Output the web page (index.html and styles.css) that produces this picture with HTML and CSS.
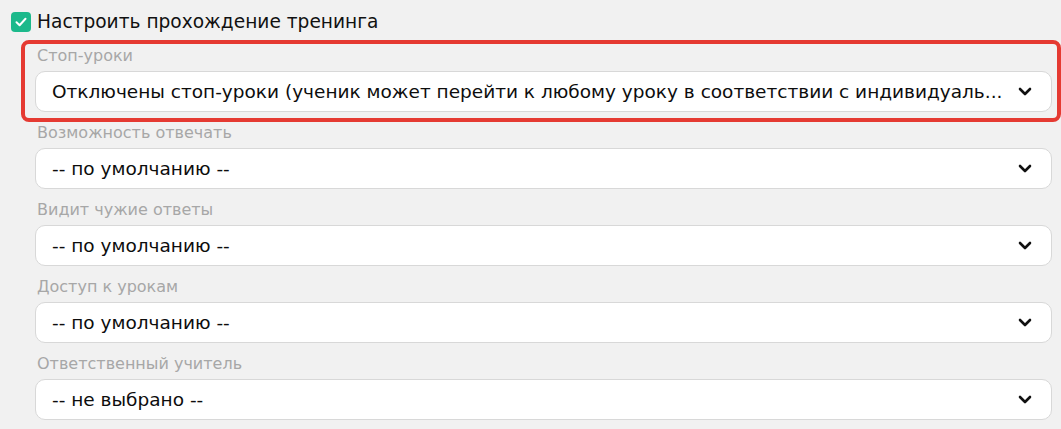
FILE: index.html
```html
<!DOCTYPE html>
<html lang="ru">
<head>
<meta charset="utf-8">
<title>Настроить прохождение тренинга</title>
<link rel="stylesheet" href="styles.css">
</head>
<body>
<div class="page">
  <label class="toggle">
    <span class="checkbox">
      <svg width="14" height="14" viewBox="0 0 14 14"><path d="M2.5 7.3 L5.6 10.2 L11.5 3.8" fill="none" stroke="#fff" stroke-width="2" stroke-linecap="round" stroke-linejoin="round"/></svg>
    </span>
    <span class="toggle-text">Настроить прохождение тренинга</span>
  </label>
  <div class="fields">
    <div class="field">
      <div class="highlight"></div>
      <div class="field-label">Стоп-уроки</div>
      <div class="select">
        <span class="select-value">Отключены стоп-уроки (ученик может перейти к любому уроку в соответствии с индивидуаль...</span>
        <svg class="chevron" width="14" height="9" viewBox="0 0 14 9"><path d="M2 2 L7 7 L12 2" fill="none" stroke="#111" stroke-width="2.6" stroke-linecap="round" stroke-linejoin="round"/></svg>
      </div>
    </div>
    <div class="field">
      <div class="field-label">Возможность отвечать</div>
      <div class="select">
        <span class="select-value">-- по умолчанию --</span>
        <svg class="chevron" width="14" height="9" viewBox="0 0 14 9"><path d="M2 2 L7 7 L12 2" fill="none" stroke="#111" stroke-width="2.6" stroke-linecap="round" stroke-linejoin="round"/></svg>
      </div>
    </div>
    <div class="field">
      <div class="field-label">Видит чужие ответы</div>
      <div class="select">
        <span class="select-value">-- по умолчанию --</span>
        <svg class="chevron" width="14" height="9" viewBox="0 0 14 9"><path d="M2 2 L7 7 L12 2" fill="none" stroke="#111" stroke-width="2.6" stroke-linecap="round" stroke-linejoin="round"/></svg>
      </div>
    </div>
    <div class="field">
      <div class="field-label">Доступ к урокам</div>
      <div class="select">
        <span class="select-value">-- по умолчанию --</span>
        <svg class="chevron" width="14" height="9" viewBox="0 0 14 9"><path d="M2 2 L7 7 L12 2" fill="none" stroke="#111" stroke-width="2.6" stroke-linecap="round" stroke-linejoin="round"/></svg>
      </div>
    </div>
    <div class="field">
      <div class="field-label">Ответственный учитель</div>
      <div class="select">
        <span class="select-value">-- не выбрано --</span>
        <svg class="chevron" width="14" height="9" viewBox="0 0 14 9"><path d="M2 2 L7 7 L12 2" fill="none" stroke="#111" stroke-width="2.6" stroke-linecap="round" stroke-linejoin="round"/></svg>
      </div>
    </div>
  </div>
</div>
</body>
</html>
```

FILE: styles.css
```css
* { box-sizing: border-box; }
html, body { margin: 0; padding: 0; }
body {
  background: #f1f1f1;
  font-family: "DejaVu Sans", "Noto Sans", sans-serif;
  color: #111;
  width: 1061px;
  height: 429px;
  overflow: hidden;
}
.page {
  padding: 12px 9px 0 11px;
}
.toggle {
  display: flex;
  align-items: center;
  gap: 6px;
  height: 20px;
}
.checkbox {
  width: 20px;
  height: 20px;
  border-radius: 4px;
  background: #1cb98b;
  display: flex;
  align-items: center;
  justify-content: center;
  flex: none;
}
.toggle-text {
  font-size: 18.6px;
  line-height: 20px;
  color: #111;
}
.fields {
  margin-top: 14px;
  padding-left: 24px;
  display: flex;
  flex-direction: column;
  gap: 11px;
}
.field {
  position: relative;
}
.highlight {
  position: absolute;
  left: -14px;
  right: -9px;
  top: -6px;
  bottom: -10px;
  border: 4px solid #e53a32;
  border-radius: 8px;
  pointer-events: none;
}
.field-label {
  font-size: 16px;
  line-height: 20px;
  color: #a7a7a7;
  padding-left: 2px;
  margin-bottom: 5px;
}
.select {
  height: 41px;
  background: #fff;
  border: 1px solid #d8d8d8;
  border-radius: 10px;
  display: flex;
  align-items: center;
  padding: 0 19px 0 16px;
}
.select-value {
  flex: 1;
  min-width: 0;
  font-size: 18.5px;
  white-space: nowrap;
  overflow: hidden;
  padding-right: 12px;
  color: #0d0d0d;
}
.chevron {
  flex: none;
}
```
